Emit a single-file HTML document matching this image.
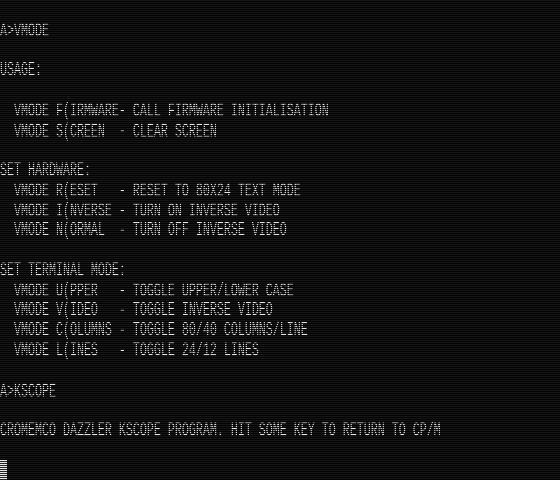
<!DOCTYPE html>
<html><head><meta charset="utf-8"><style>
html,body{margin:0;padding:0;background:#000;}
#s{position:relative;width:560px;height:480px;overflow:hidden;background:#161616;}
pre{position:absolute;left:0;top:2px;margin:0;font-family:"Liberation Mono",monospace;font-size:11.67px;line-height:11.7647px;color:#e6e6e6;transform:scaleY(1.7);transform-origin:0 0;letter-spacing:0;}
#cur{position:absolute;left:0;top:460px;width:7px;height:20px;background:#e6e6e6;}
#o{position:absolute;inset:0;background:repeating-linear-gradient(to bottom,transparent 0,transparent 1px,rgba(0,0,0,.85) 1px,rgba(0,0,0,.85) 2px);}
</style></head><body><div id="s"><pre>

A&gt;VMODE

USAGE:

  VMODE F(IRMWARE- CALL FIRMWARE INITIALISATION
  VMODE S(CREEN  - CLEAR SCREEN

SET HARDWARE:
  VMODE R(ESET   - RESET TO 80X24 TEXT MODE
  VMODE I(NVERSE - TURN ON INVERSE VIDEO
  VMODE N(ORMAL  - TURN OFF INVERSE VIDEO

SET TERMINAL MODE:
  VMODE U(PPER   - TOGGLE UPPER/LOWER CASE
  VMODE V(IDEO   - TOGGLE INVERSE VIDEO
  VMODE C(OLUMNS - TOGGLE 80/40 COLUMNS/LINE
  VMODE L(INES   - TOGGLE 24/12 LINES

A&gt;KSCOPE

CROMEMCO DAZZLER KSCOPE PROGRAM. HIT SOME KEY TO RETURN TO CP/M
</pre><div id="cur"></div><div id="o"></div></div></body></html>
